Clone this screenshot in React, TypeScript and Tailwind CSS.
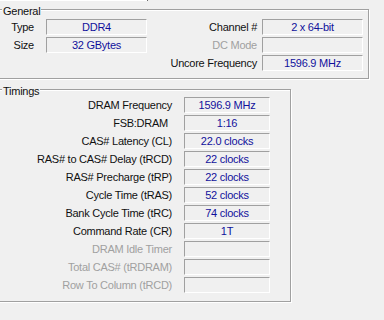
import type { ReactNode } from "react";

const timings = [
  { label: "DRAM Frequency", value: "1596.9 MHz" },
  { label: "FSB:DRAM", value: "1:16", nudge: true },
  { label: "CAS# Latency (CL)", value: "22.0 clocks" },
  { label: "RAS# to CAS# Delay (tRCD)", value: "22 clocks" },
  { label: "RAS# Precharge (tRP)", value: "22 clocks" },
  { label: "Cycle Time (tRAS)", value: "52 clocks" },
  { label: "Bank Cycle Time (tRC)", value: "74 clocks" },
  { label: "Command Rate (CR)", value: "1T" },
  { label: "DRAM Idle Timer", value: "", disabled: true },
  { label: "Total CAS# (tRDRAM)", value: "", disabled: true },
  { label: "Row To Column (tRCD)", value: "", disabled: true },
];

// sunken read-only box, like a disabled win32 edit
function Field({ value, className }: { value?: string; className: string }) {
  return (
    <div
      className={`flex h-[16px] items-center justify-center border border-t-[#a0a0a0] border-l-[#a0a0a0] border-b-white border-r-white leading-[13px] text-[#10109c] ${className}`}
    >
      {value}
    </div>
  );
}

function Label({ text, disabled, className }: { text: string; disabled?: boolean; className: string }) {
  return (
    <div
      className={`h-[16px] text-right leading-[16px] whitespace-nowrap ${
        disabled ? "text-[#a0a0a0]" : "text-[#101010]"
      } ${className}`}
    >
      {text}
    </div>
  );
}

// etched group box with caption over the top line
function Group({ title, className, children }: { title: string; className: string; children: ReactNode }) {
  return (
    <div
      className={`relative -ml-[2px] border border-[#a0a0a0] shadow-[inset_1px_1px_0_#fff,1px_1px_0_#fff] ${className}`}
    >
      <span className="absolute left-[3px] top-[-5px] bg-[#f0f0f0] px-px leading-[13px] text-[#101010]">
        {title}
      </span>
      {children}
    </div>
  );
}

export default function App() {
  return (
    <div className="h-[320px] w-[384px] overflow-hidden bg-[#f0f0f0] font-['Liberation_Sans',Arial,sans-serif] text-[11px] tracking-[-0.25px]">
      {/* bottom edge of the tab strip */}
      <div className="flex h-px">
        <div className="w-[147px] bg-white" />
        <div className="w-px bg-[#696969]" />
      </div>

      <Group title="General" className="mt-[8px] w-[371px] pt-[9px] pb-[7px]">
        <div className="flex flex-col gap-[2px]">
          <div className="flex">
            <Label text="Type" className="w-[35px]" />
            <Field value="DDR4" className="ml-[12px] w-[101px]" />
            <Label text="Channel #" className="w-[110px]" />
            <Field value="2 x 64-bit" className="ml-[5px] w-[101px]" />
          </div>
          <div className="flex">
            <Label text="Size" className="w-[35px]" />
            <Field value="32 GBytes" className="ml-[12px] w-[101px]" />
            <Label text="DC Mode" disabled className="w-[110px]" />
            <Field className="ml-[5px] w-[101px]" />
          </div>
          <div className="flex">
            <Label text="Uncore Frequency" className="w-[258px]" />
            <Field value="1596.9 MHz" className="ml-[5px] w-[101px]" />
          </div>
        </div>
      </Group>

      <Group title="Timings" className="mt-[10px] w-[293px] pt-[7px] pb-[8px]">
        <div className="flex flex-col gap-[2px]">
          {timings.map((t) => (
            <div key={t.label} className="flex">
              <Label
                text={t.label}
                disabled={t.disabled}
                className={t.nudge ? "w-[173px] pr-[4px]" : "w-[173px]"}
              />
              <Field value={t.value} className="ml-[12px] w-[86px]" />
            </div>
          ))}
        </div>
      </Group>
    </div>
  );
}
